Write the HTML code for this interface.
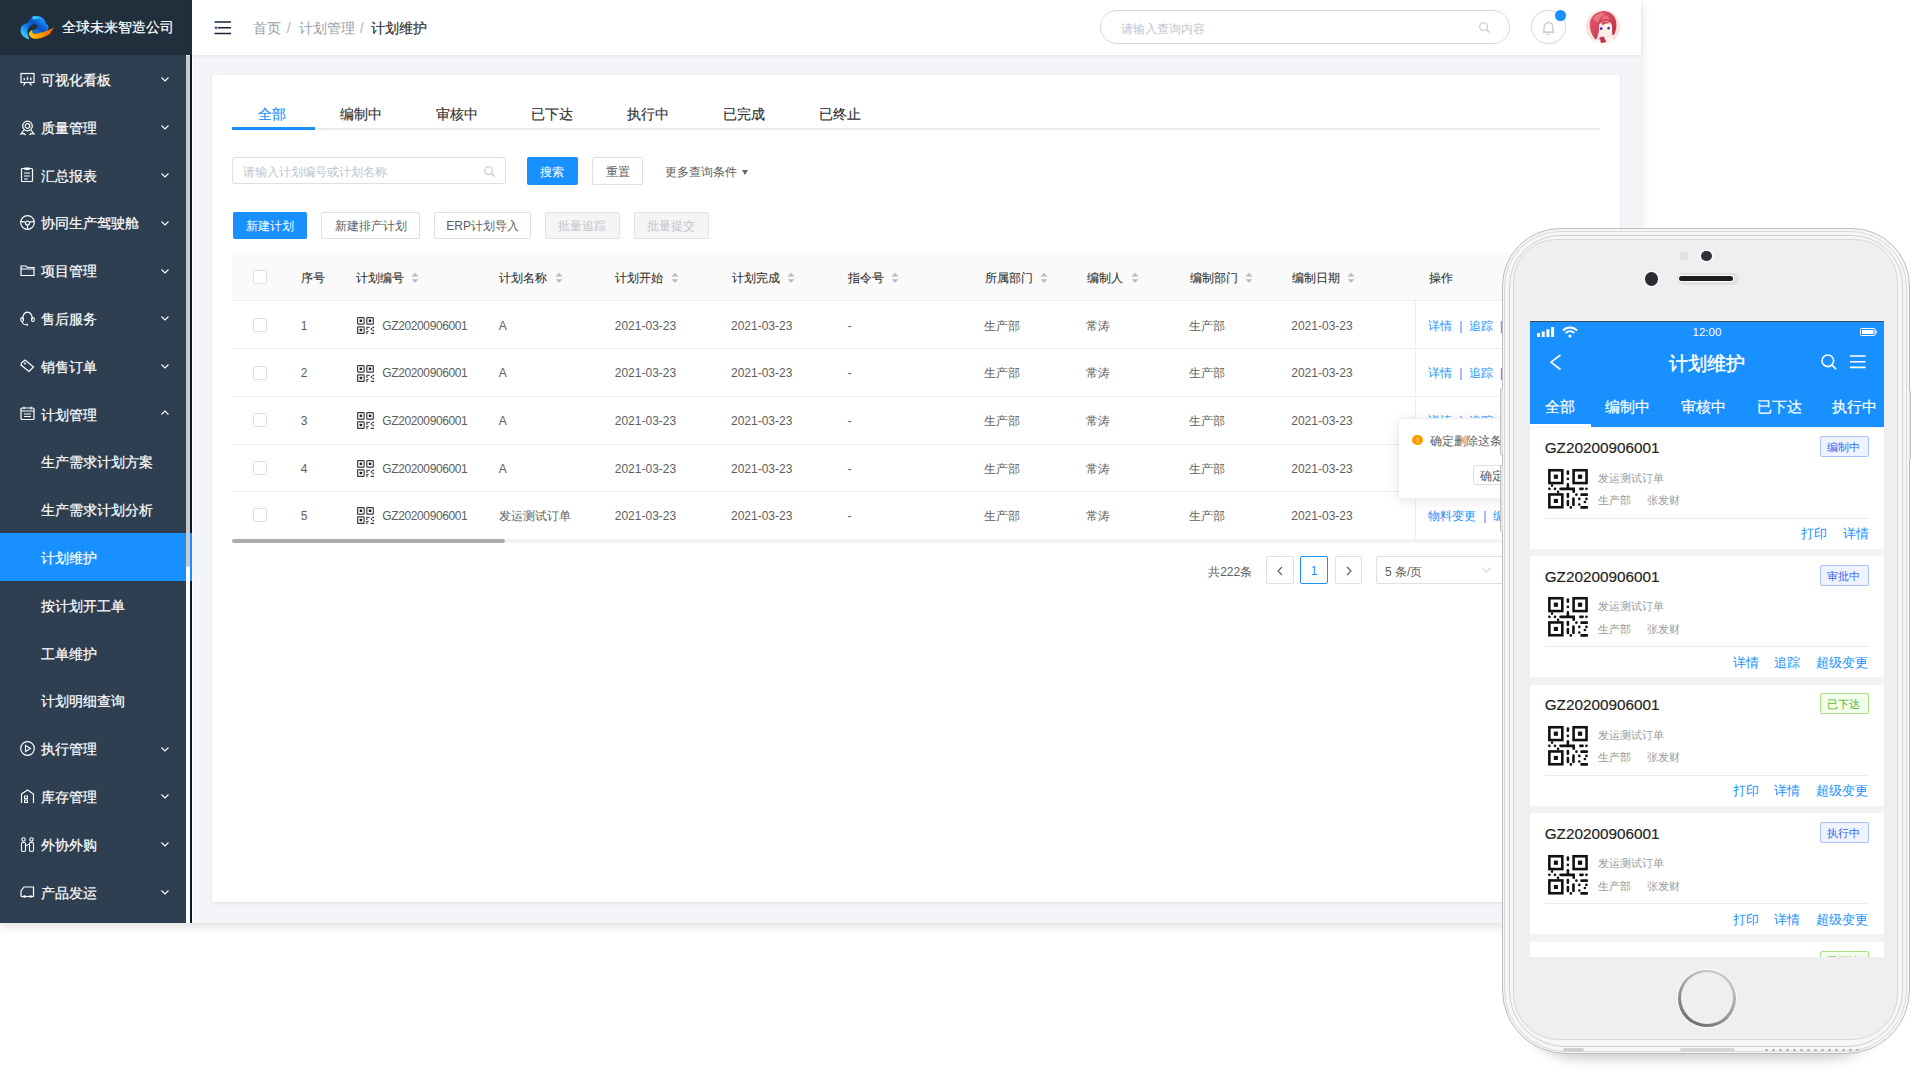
<!DOCTYPE html><html><head><meta charset="utf-8"><style>
html,body{margin:0;padding:0}
body{width:1920px;height:1080px;overflow:hidden;position:relative;background:#fff;font-family:"Liberation Sans",sans-serif}
.a{position:absolute}
.t{position:absolute;white-space:nowrap;line-height:1}
svg{overflow:visible}
</style></head><body>

<div class="a" style="left:0px;top:0px;width:1641.00px;height:922.50px;background:#f4f5f8;box-shadow:0 4px 9px rgba(0,0,0,0.12)"></div>
<div class="a" style="left:0px;top:0px;width:191.50px;height:922.50px;background:#2f3f52"></div>
<div class="a" style="left:0px;top:0px;width:191.50px;height:54.50px;background:#212e3c"></div>
<div class="a" style="left:190px;top:54.5px;width:1.50px;height:868.00px;background:#0b1b2b"></div>
<div class="a" style="left:0px;top:533.4px;width:191.50px;height:47.80px;background:#1890ff"></div>
<div class="a" style="left:190px;top:533.4px;width:1.50px;height:47.80px;background:#1890ff"></div>
<div class="a" style="left:186px;top:54.5px;width:4.00px;height:868.00px;background:#fff"></div>
<div class="a" style="left:186px;top:54.5px;width:4.00px;height:512.50px;background:#c9c9c9;border-radius:2px"></div>
<svg class="a" style="left:16px;top:12px" width="44" height="32" viewBox="0 0 1485 1080">
<defs><linearGradient id="lg1" x1="0.1" y1="0.9" x2="0.8" y2="0.2"><stop offset="0" stop-color="#45d8ff"/><stop offset="0.35" stop-color="#0d86f0"/><stop offset="0.7" stop-color="#0a4fc0"/><stop offset="1" stop-color="#1a8df5"/></linearGradient>
<linearGradient id="lg1b" x1="0" y1="0" x2="0" y2="1"><stop offset="0" stop-color="#3ad4ff"/><stop offset="0.3" stop-color="#0c6fe0"/><stop offset="1" stop-color="#0a48b0"/></linearGradient>
<linearGradient id="lg2" x1="0" y1="0" x2="1" y2="0"><stop offset="0" stop-color="#ffc400"/><stop offset="0.6" stop-color="#ff8a00"/><stop offset="1" stop-color="#ff5a00"/></linearGradient></defs>
<path d="M450 930 C250 880 120 720 160 560 C190 430 300 380 400 370 C430 230 560 130 720 140 C900 150 990 280 1000 380 C1090 420 1120 520 1080 600 C1040 680 950 710 850 715 L600 720 C540 720 520 680 560 640 C620 600 720 560 720 480 C720 420 650 400 580 420 C450 460 380 560 390 680 C400 800 450 880 450 930 Z" fill="url(#lg1)"/>
<path d="M560 140 C650 120 800 130 900 220 C800 200 700 220 620 260 C560 240 520 200 560 140 Z" fill="#3fd0ff" opacity="0.8"/>
<path d="M440 700 C470 640 530 610 580 600 C520 650 530 720 620 730 C800 740 1050 650 1310 510 C1200 640 1150 700 1170 720 C1080 780 950 880 720 900 C560 910 430 860 440 700 Z" fill="url(#lg2)"/>
</svg>
<div class="t" style="left:61.66px;top:20.38px;font-size:14px;color:#fff;font-weight:400;-webkit-text-stroke:0.2px #fff">全球未来智造公司</div>
<div class="t" style="left:40.66px;top:72.98px;font-size:14px;color:#fff;font-weight:400;-webkit-text-stroke:0.2px #fff">可视化看板</div>
<svg class="a" style="left:160px;top:76.3px;" width="10" height="7" viewBox="0 0 10 7"><path d="M1.5 1.5 L5 5 L8.5 1.5" fill="none" stroke="#fff" stroke-width="1.1"/></svg>
<svg class="a" style="left:20px;top:71.8px;" width="15" height="15" viewBox="0 0 15 15"><rect x="1" y="1.5" width="13" height="9" fill="none" stroke="#fff" stroke-width="1.2"/><path d="M4.2 8.2v-2.2M7.5 8.2v-3.4M10.8 8.2v-2.6M3.5 13.5l2-3M11.5 13.5l-2-3" stroke="#fff" stroke-width="1.3"/></svg>
<div class="t" style="left:40.66px;top:120.78px;font-size:14px;color:#fff;font-weight:400;-webkit-text-stroke:0.2px #fff">质量管理</div>
<svg class="a" style="left:160px;top:124.1px;" width="10" height="7" viewBox="0 0 10 7"><path d="M1.5 1.5 L5 5 L8.5 1.5" fill="none" stroke="#fff" stroke-width="1.1"/></svg>
<svg class="a" style="left:20px;top:119.6px;" width="15" height="15" viewBox="0 0 15 15"><circle cx="7.5" cy="6" r="4.8" fill="none" stroke="#fff" stroke-width="1.2"/><circle cx="7.5" cy="6" r="2.3" fill="none" stroke="#fff" stroke-width="1.2"/><path d="M4 10 L1 14 L4 13.5 L5.5 15 M11 10 L14 14 L11 13.5 L9.5 15" fill="none" stroke="#fff" stroke-width="1.2"/></svg>
<div class="t" style="left:40.66px;top:168.58px;font-size:14px;color:#fff;font-weight:400;-webkit-text-stroke:0.2px #fff">汇总报表</div>
<svg class="a" style="left:160px;top:171.89999999999998px;" width="10" height="7" viewBox="0 0 10 7"><path d="M1.5 1.5 L5 5 L8.5 1.5" fill="none" stroke="#fff" stroke-width="1.1"/></svg>
<svg class="a" style="left:20px;top:167.39999999999998px;" width="15" height="15" viewBox="0 0 15 15"><rect x="1.5" y="1.5" width="11" height="13" rx="1" fill="none" stroke="#fff" stroke-width="1.2"/><path d="M5 1.5v-0.5h4v1.5h-4z M4 6h6M4 9h6M4 12h4" stroke="#fff" stroke-width="1.1" fill="none"/></svg>
<div class="t" style="left:40.66px;top:216.38px;font-size:14px;color:#fff;font-weight:400;-webkit-text-stroke:0.2px #fff">协同生产驾驶舱</div>
<svg class="a" style="left:160px;top:219.7px;" width="10" height="7" viewBox="0 0 10 7"><path d="M1.5 1.5 L5 5 L8.5 1.5" fill="none" stroke="#fff" stroke-width="1.1"/></svg>
<svg class="a" style="left:20px;top:215.2px;" width="15" height="15" viewBox="0 0 15 15"><circle cx="7.5" cy="7.5" r="6.8" fill="none" stroke="#fff" stroke-width="1.2"/><circle cx="7.5" cy="8" r="2" fill="none" stroke="#fff" stroke-width="1.1"/><path d="M1 6.8 Q3.5 6.2 5.5 7.4 M9.5 7.4 Q11.5 6.2 14 6.8 M7.5 10 V14.2" fill="none" stroke="#fff" stroke-width="1.1"/></svg>
<div class="t" style="left:40.66px;top:264.18px;font-size:14px;color:#fff;font-weight:400;-webkit-text-stroke:0.2px #fff">项目管理</div>
<svg class="a" style="left:160px;top:267.5px;" width="10" height="7" viewBox="0 0 10 7"><path d="M1.5 1.5 L5 5 L8.5 1.5" fill="none" stroke="#fff" stroke-width="1.1"/></svg>
<svg class="a" style="left:20px;top:263.0px;" width="15" height="15" viewBox="0 0 15 15"><path d="M1 3 H6 L7.5 4.5 H14 V12.5 H1 Z M1 6 H14" fill="none" stroke="#fff" stroke-width="1.2"/></svg>
<div class="t" style="left:40.66px;top:311.98px;font-size:14px;color:#fff;font-weight:400;-webkit-text-stroke:0.2px #fff">售后服务</div>
<svg class="a" style="left:160px;top:315.3px;" width="10" height="7" viewBox="0 0 10 7"><path d="M1.5 1.5 L5 5 L8.5 1.5" fill="none" stroke="#fff" stroke-width="1.1"/></svg>
<svg class="a" style="left:20px;top:310.8px;" width="15" height="15" viewBox="0 0 15 15"><path d="M2.8 8.5 C2.3 4 4.8 1.2 7.5 1.2 C10.2 1.2 12.7 4 12.2 8.5" fill="none" stroke="#fff" stroke-width="1.2"/><rect x="0.8" y="6.5" width="2.6" height="4" rx="1.2" fill="none" stroke="#fff" stroke-width="1.1"/><rect x="11.6" y="6.5" width="2.6" height="4" rx="1.2" fill="none" stroke="#fff" stroke-width="1.1"/><path d="M2.2 10.5 C2.6 13 4.5 13.8 6.5 13.8" fill="none" stroke="#fff" stroke-width="1.1"/><circle cx="7.2" cy="13.8" r="1" fill="#fff"/></svg>
<div class="t" style="left:40.66px;top:359.78px;font-size:14px;color:#fff;font-weight:400;-webkit-text-stroke:0.2px #fff">销售订单</div>
<svg class="a" style="left:160px;top:363.09999999999997px;" width="10" height="7" viewBox="0 0 10 7"><path d="M1.5 1.5 L5 5 L8.5 1.5" fill="none" stroke="#fff" stroke-width="1.1"/></svg>
<svg class="a" style="left:20px;top:358.59999999999997px;" width="15" height="15" viewBox="0 0 15 15"><path d="M1.5 4 L5 1 L13.5 8 L9 12.5 L1 6 Z" fill="none" stroke="#fff" stroke-width="1.2"/><circle cx="5" cy="4.5" r="1" fill="#fff"/></svg>
<div class="t" style="left:40.66px;top:407.58px;font-size:14px;color:#fff;font-weight:400;-webkit-text-stroke:0.2px #fff">计划管理</div>
<svg class="a" style="left:160px;top:409.4px;" width="10" height="7" viewBox="0 0 10 7"><path d="M1.5 5.5 L5 2 L8.5 5.5" fill="none" stroke="#fff" stroke-width="1.1"/></svg>
<svg class="a" style="left:20px;top:406.4px;" width="15" height="15" viewBox="0 0 15 15"><rect x="1" y="2" width="13" height="11.5" rx="1" fill="none" stroke="#fff" stroke-width="1.2"/><path d="M1 5H14M4 0.5v3M11 0.5v3M4 8h7M4 10.5h7" stroke="#fff" stroke-width="1.1"/></svg>
<div class="t" style="left:40.66px;top:455.38px;font-size:14px;color:#fff;font-weight:400;-webkit-text-stroke:0.2px #fff">生产需求计划方案</div>
<div class="t" style="left:40.66px;top:503.18px;font-size:14px;color:#fff;font-weight:400;-webkit-text-stroke:0.2px #fff">生产需求计划分析</div>
<div class="t" style="left:40.66px;top:550.98px;font-size:14px;color:#fff;font-weight:400;-webkit-text-stroke:0.2px #fff">计划维护</div>
<div class="t" style="left:40.66px;top:598.78px;font-size:14px;color:#fff;font-weight:400;-webkit-text-stroke:0.2px #fff">按计划开工单</div>
<div class="t" style="left:40.66px;top:646.58px;font-size:14px;color:#fff;font-weight:400;-webkit-text-stroke:0.2px #fff">工单维护</div>
<div class="t" style="left:40.66px;top:694.38px;font-size:14px;color:#fff;font-weight:400;-webkit-text-stroke:0.2px #fff">计划明细查询</div>
<div class="t" style="left:40.66px;top:742.18px;font-size:14px;color:#fff;font-weight:400;-webkit-text-stroke:0.2px #fff">执行管理</div>
<svg class="a" style="left:160px;top:745.4999999999999px;" width="10" height="7" viewBox="0 0 10 7"><path d="M1.5 1.5 L5 5 L8.5 1.5" fill="none" stroke="#fff" stroke-width="1.1"/></svg>
<svg class="a" style="left:20px;top:740.9999999999999px;" width="15" height="15" viewBox="0 0 15 15"><circle cx="7.5" cy="7.5" r="6.8" fill="none" stroke="#fff" stroke-width="1.2"/><path d="M5.5 4.5 L10.5 7.5 L5.5 10.5 Z" fill="none" stroke="#fff" stroke-width="1.1"/></svg>
<div class="t" style="left:40.66px;top:789.98px;font-size:14px;color:#fff;font-weight:400;-webkit-text-stroke:0.2px #fff">库存管理</div>
<svg class="a" style="left:160px;top:793.3px;" width="10" height="7" viewBox="0 0 10 7"><path d="M1.5 1.5 L5 5 L8.5 1.5" fill="none" stroke="#fff" stroke-width="1.1"/></svg>
<svg class="a" style="left:20px;top:788.8px;" width="15" height="15" viewBox="0 0 15 15"><path d="M1.5 14 V5 L7.5 1 L13.5 5 V14" fill="none" stroke="#fff" stroke-width="1.2"/><rect x="4.5" y="7" width="3" height="2.5" fill="none" stroke="#fff" stroke-width="1"/><rect x="4.5" y="11" width="3" height="2.5" fill="none" stroke="#fff" stroke-width="1"/></svg>
<div class="t" style="left:40.66px;top:837.78px;font-size:14px;color:#fff;font-weight:400;-webkit-text-stroke:0.2px #fff">外协外购</div>
<svg class="a" style="left:160px;top:841.0999999999999px;" width="10" height="7" viewBox="0 0 10 7"><path d="M1.5 1.5 L5 5 L8.5 1.5" fill="none" stroke="#fff" stroke-width="1.1"/></svg>
<svg class="a" style="left:20px;top:836.5999999999999px;" width="15" height="15" viewBox="0 0 15 15"><circle cx="3.5" cy="2.5" r="1.7" fill="none" stroke="#fff" stroke-width="1.1"/><circle cx="11.5" cy="2.5" r="1.7" fill="none" stroke="#fff" stroke-width="1.1"/><rect x="1.5" y="5.5" width="4" height="9" rx="1.2" fill="none" stroke="#fff" stroke-width="1.1"/><rect x="9.5" y="5.5" width="4" height="9" rx="1.2" fill="none" stroke="#fff" stroke-width="1.1"/><path d="M5.5 9 L9.5 7" stroke="#fff" stroke-width="1"/></svg>
<div class="t" style="left:40.66px;top:885.58px;font-size:14px;color:#fff;font-weight:400;-webkit-text-stroke:0.2px #fff">产品发运</div>
<svg class="a" style="left:160px;top:888.8999999999999px;" width="10" height="7" viewBox="0 0 10 7"><path d="M1.5 1.5 L5 5 L8.5 1.5" fill="none" stroke="#fff" stroke-width="1.1"/></svg>
<svg class="a" style="left:20px;top:884.3999999999999px;" width="15" height="15" viewBox="0 0 15 15"><path d="M1 12.5 V7 L4 3 H13.5 V12.5" fill="none" stroke="#fff" stroke-width="1.2"/><path d="M1 12.5 H14" stroke="#fff" stroke-width="1.2"/><circle cx="4.5" cy="12.5" r="1.3" fill="#fff"/><circle cx="10.5" cy="12.5" r="1.3" fill="#fff"/></svg>
<div class="a" style="left:191.5px;top:0px;width:1449.50px;height:55.00px;background:#fff;box-shadow:0 1px 4px rgba(0,21,41,0.08)"></div>
<div class="a" style="left:191.5px;top:0px;width:1.00px;height:922.50px;background:#fff"></div>
<svg class="a" style="left:213.5px;top:20.5px;" width="18" height="14" viewBox="0 0 18 14"><path d="M0.5 1h16.5M3.5 6.8h13.5M0.5 12.6h16.5" stroke="#15243a" stroke-width="1.5"/><path d="M0.3 6.8 L2.6 5.2 L2.6 8.4 Z" fill="#15243a"/></svg>
<div class="t" style="left:253.36px;top:21.38px;font-size:14px;color:#97a0ab;font-weight:400;">首页</div>
<div class="t" style="left:286.66px;top:21.38px;font-size:14px;color:#b0b6be;font-weight:400;">/</div>
<div class="t" style="left:298.96px;top:21.38px;font-size:14px;color:#97a0ab;font-weight:400;">计划管理</div>
<div class="t" style="left:359.66px;top:21.38px;font-size:14px;color:#b0b6be;font-weight:400;">/</div>
<div class="t" style="left:371.36px;top:21.38px;font-size:14px;color:#303133;font-weight:400;-webkit-text-stroke:0.2px #303133">计划维护</div>
<div class="a" style="left:1100.4px;top:10px;width:410.10px;height:34.20px;border:1px solid #d9d9d9;border-radius:18px;box-sizing:border-box;background:#fff"></div>
<div class="t" style="left:1121.08px;top:22.74px;font-size:12px;color:#c0c4cc;font-weight:400;">请输入查询内容</div>
<svg class="a" style="left:1479px;top:22px;" width="12" height="12" viewBox="0 0 12 12"><circle cx="4.6" cy="4.6" r="3.9" fill="none" stroke="#c0c4cc" stroke-width="1.1"/><path d="M7.5 7.5 L10.5 10.5" stroke="#c0c4cc" stroke-width="1.2"/></svg>
<div class="a" style="left:1531px;top:10px;width:34.50px;height:34.20px;border:1px solid #d9d9d9;border-radius:50%;box-sizing:border-box;background:#fff"></div>
<svg class="a" style="left:1542px;top:20.5px;" width="13" height="15" viewBox="0 0 13 15"><path d="M2 11 V6.5 C2 3.5 4 1.8 6.5 1.8 C9 1.8 11 3.5 11 6.5 V11 Z M0.8 11.2 H12.2" fill="none" stroke="#bdbdbd" stroke-width="1.1"/><path d="M6.5 0.5 V1.8 M4.8 12.5 C5 13.8 8 13.8 8.2 12.5" fill="none" stroke="#c0c4cc" stroke-width="1.1"/></svg>
<div class="a" style="left:1555px;top:10px;width:10.5px;height:10.5px;border-radius:50%;background:#1890ff"></div>
<svg class="a" style="left:1586px;top:9.7px;" width="34" height="34" viewBox="0 0 34 34">
<defs><clipPath id="avc"><circle cx="17" cy="17" r="17"/></clipPath>
<linearGradient id="hair" x1="0" y1="0" x2="1" y2="1"><stop offset="0" stop-color="#e25c6e"/><stop offset="0.5" stop-color="#d44458"/><stop offset="1" stop-color="#b8283e"/></linearGradient></defs>
<g clip-path="url(#avc)">
<rect width="34" height="34" fill="#f8e2dc"/>
<path d="M8 34 L9.5 27 C14 28.5 21 28.5 26 26.5 L29 34 Z" fill="#fdf6f2"/>
<path d="M3.8 15 C3.5 8 8.5 2.5 16 1.2 C22.5 0.5 28.5 4.5 30 11 C31 16 30 21 28 25 L26.5 25 L25.5 15.5 C23.5 11.5 19.5 10.5 16 12.5 C13.5 14 12.8 17.5 13 21 C12 24.5 11.5 27.5 10 30 C6.5 26.5 4 21 3.8 15 Z" fill="url(#hair)"/>
<path d="M7.5 8 C10 4.5 14.5 2.8 19 3 C16.5 5 13.5 8 12 12 C10 11.5 8.5 10 7.5 8 Z" fill="#f0808e" opacity="0.85"/>
<path d="M17 5.5 C20 5 23.5 6.5 24.5 9.5 C21.5 8.5 18.5 9 16 10 Z" fill="#f07a88" opacity="0.8"/>
<path d="M13 15 C15.5 11.5 20.5 10.5 25 13 C26.5 16 26.5 20.5 25.5 22.5 C24 25 21.5 26.5 19 26.5 C16 26 14 24 13.2 21 Z" fill="#fcf0e8"/>
<path d="M15.5 13 C18 11 22 11.5 24.5 13.5 C21.5 13 18.5 13.5 16.5 15.5 Z" fill="#d44458"/>
<ellipse cx="15.2" cy="18.5" rx="1.3" ry="1.5" fill="#4a2fae"/><ellipse cx="22.6" cy="18.2" rx="1.2" ry="1.4" fill="#4a2fae"/>
<path d="M13.5 27.5 L17.5 26.5 L20.5 32 L15 33 Z" fill="#c2304a"/>
<path d="M11 29 L13.5 27 L14.5 30.5 Z" fill="#c0bddc"/>
</g></svg>
<div class="a" style="left:212px;top:75px;width:1408.00px;height:827.00px;background:#fff;box-shadow:0 1px 3px rgba(0,0,0,0.11)"></div>
<div class="t" style="left:257.56px;top:106.98px;font-size:14px;color:#1890ff;font-weight:400;-webkit-text-stroke:0.15px #1890ff">全部</div>
<div class="t" style="left:340.16px;top:106.98px;font-size:14px;color:#303133;font-weight:400;-webkit-text-stroke:0.15px #303133">编制中</div>
<div class="t" style="left:435.76px;top:106.98px;font-size:14px;color:#303133;font-weight:400;-webkit-text-stroke:0.15px #303133">审核中</div>
<div class="t" style="left:531.36px;top:106.98px;font-size:14px;color:#303133;font-weight:400;-webkit-text-stroke:0.15px #303133">已下达</div>
<div class="t" style="left:626.66px;top:106.98px;font-size:14px;color:#303133;font-weight:400;-webkit-text-stroke:0.15px #303133">执行中</div>
<div class="t" style="left:723.16px;top:106.98px;font-size:14px;color:#303133;font-weight:400;-webkit-text-stroke:0.15px #303133">已完成</div>
<div class="t" style="left:819.16px;top:106.98px;font-size:14px;color:#303133;font-weight:400;-webkit-text-stroke:0.15px #303133">已终止</div>
<div class="a" style="left:232px;top:128px;width:1368.00px;height:2.00px;background:#e9ebef"></div>
<div class="a" style="left:232px;top:126.6px;width:82.70px;height:3.20px;background:#1890ff"></div>
<div class="a" style="left:232px;top:157px;width:273.50px;height:27.40px;border:1px solid #dcdfe6;border-radius:2px;box-sizing:border-box"></div>
<div class="t" style="left:242.68px;top:166.34px;font-size:12px;color:#c0c4cc;font-weight:400;">请输入计划编号或计划名称</div>
<svg class="a" style="left:483.5px;top:165.5px;" width="12" height="12" viewBox="0 0 12 12"><circle cx="4.6" cy="4.6" r="3.9" fill="none" stroke="#c0c4cc" stroke-width="1.1"/><path d="M7.5 7.5 L10.5 10.5" stroke="#c0c4cc" stroke-width="1.2"/></svg>
<div class="a" style="left:526.5px;top:157px;width:51.00px;height:27.50px;background:#1890ff;border-radius:2px"></div>
<div class="t" style="left:539.68px;top:166.34px;font-size:12px;color:#fff;font-weight:400;">搜索</div>
<div class="a" style="left:592px;top:157px;width:51.30px;height:27.50px;border:1px solid #dcdfe6;border-radius:2px;box-sizing:border-box;background:#fff"></div>
<div class="t" style="left:606.08px;top:166.34px;font-size:12px;color:#5e5e5e;font-weight:400;">重置</div>
<div class="t" style="left:664.68px;top:166.34px;font-size:12px;color:#5e5e5e;font-weight:400;">更多查询条件</div>
<svg class="a" style="left:741.5px;top:169.5px;" width="6" height="5" viewBox="0 0 6 5"><path d="M0 0 H6 L3 5 Z" fill="#606266"/></svg>
<div class="a" style="left:232.6px;top:212.2px;width:74.80px;height:26.90px;background:#1890ff;border-radius:2px"></div>
<div class="t" style="left:232.6px;width:74.80px;text-align:center;top:220.44px;font-size:12px;color:#fff">新建计划</div>
<div class="a" style="left:321.4px;top:212.2px;width:98.60px;height:26.90px;border:1px solid #dcdfe6;border-radius:2px;box-sizing:border-box;background:#fff"></div>
<div class="t" style="left:321.4px;width:98.60px;text-align:center;top:220.44px;font-size:12px;color:#5e5e5e">新建排产计划</div>
<div class="a" style="left:434.2px;top:212.2px;width:97.00px;height:26.90px;border:1px solid #dcdfe6;border-radius:2px;box-sizing:border-box;background:#fff"></div>
<div class="t" style="left:434.2px;width:97.00px;text-align:center;top:220.44px;font-size:12px;color:#5e5e5e">ERP计划导入</div>
<div class="a" style="left:545.3px;top:212.2px;width:74.40px;height:26.90px;border:1px solid #e3e3e3;border-radius:2px;box-sizing:border-box;background:#f5f5f5"></div>
<div class="t" style="left:545.3px;width:74.40px;text-align:center;top:220.44px;font-size:12px;color:#c0c4cc">批量追踪</div>
<div class="a" style="left:634.3px;top:212.2px;width:74.40px;height:26.90px;border:1px solid #e3e3e3;border-radius:2px;box-sizing:border-box;background:#f5f5f5"></div>
<div class="t" style="left:634.3px;width:74.40px;text-align:center;top:220.44px;font-size:12px;color:#c0c4cc">批量提交</div>
<div class="a" style="left:232px;top:253px;width:1368.00px;height:47.50px;background:#fafafa"></div>
<div class="a" style="left:232px;top:300px;width:1368.00px;height:1.00px;background:#ededed"></div>
<div class="a" style="left:232px;top:348.3px;width:1368.00px;height:1.00px;background:#ededed"></div>
<div class="a" style="left:232px;top:395.90000000000003px;width:1368.00px;height:1.00px;background:#ededed"></div>
<div class="a" style="left:232px;top:443.5px;width:1368.00px;height:1.00px;background:#ededed"></div>
<div class="a" style="left:232px;top:491.1px;width:1368.00px;height:1.00px;background:#ededed"></div>
<div class="a" style="left:232px;top:538.6999999999999px;width:1368.00px;height:1.00px;background:#ededed"></div>
<div class="a" style="left:253px;top:270px;width:14.00px;height:14.00px;border:1px solid #dcdfe6;border-radius:2px;box-sizing:border-box;background:#fff"></div>
<div class="t" style="left:300.88px;top:272.14px;font-size:12px;color:#333;font-weight:400;-webkit-text-stroke:0.1px #333">序号</div>
<div class="t" style="left:355.88px;top:272.14px;font-size:12px;color:#333;font-weight:400;-webkit-text-stroke:0.1px #333">计划编号</div>
<svg class="a" style="left:410.8px;top:271.5px;" width="8" height="12" viewBox="0 0 8 12"><path d="M0.5 4.5 L4 0.8 L7.5 4.5 Z M0.5 7.3 L4 11 L7.5 7.3 Z" fill="#bdbdbd"/></svg>
<div class="t" style="left:499.38px;top:272.14px;font-size:12px;color:#333;font-weight:400;-webkit-text-stroke:0.1px #333">计划名称</div>
<svg class="a" style="left:555px;top:271.5px;" width="8" height="12" viewBox="0 0 8 12"><path d="M0.5 4.5 L4 0.8 L7.5 4.5 Z M0.5 7.3 L4 11 L7.5 7.3 Z" fill="#bdbdbd"/></svg>
<div class="t" style="left:615.38px;top:272.14px;font-size:12px;color:#333;font-weight:400;-webkit-text-stroke:0.1px #333">计划开始</div>
<svg class="a" style="left:671px;top:271.5px;" width="8" height="12" viewBox="0 0 8 12"><path d="M0.5 4.5 L4 0.8 L7.5 4.5 Z M0.5 7.3 L4 11 L7.5 7.3 Z" fill="#bdbdbd"/></svg>
<div class="t" style="left:731.58px;top:272.14px;font-size:12px;color:#333;font-weight:400;-webkit-text-stroke:0.1px #333">计划完成</div>
<svg class="a" style="left:787px;top:271.5px;" width="8" height="12" viewBox="0 0 8 12"><path d="M0.5 4.5 L4 0.8 L7.5 4.5 Z M0.5 7.3 L4 11 L7.5 7.3 Z" fill="#bdbdbd"/></svg>
<div class="t" style="left:848.18px;top:272.14px;font-size:12px;color:#333;font-weight:400;-webkit-text-stroke:0.1px #333">指令号</div>
<svg class="a" style="left:891.4px;top:271.5px;" width="8" height="12" viewBox="0 0 8 12"><path d="M0.5 4.5 L4 0.8 L7.5 4.5 Z M0.5 7.3 L4 11 L7.5 7.3 Z" fill="#bdbdbd"/></svg>
<div class="t" style="left:984.78px;top:272.14px;font-size:12px;color:#333;font-weight:400;-webkit-text-stroke:0.1px #333">所属部门</div>
<svg class="a" style="left:1040px;top:271.5px;" width="8" height="12" viewBox="0 0 8 12"><path d="M0.5 4.5 L4 0.8 L7.5 4.5 Z M0.5 7.3 L4 11 L7.5 7.3 Z" fill="#bdbdbd"/></svg>
<div class="t" style="left:1086.88px;top:272.14px;font-size:12px;color:#333;font-weight:400;-webkit-text-stroke:0.1px #333">编制人</div>
<svg class="a" style="left:1130.8px;top:271.5px;" width="8" height="12" viewBox="0 0 8 12"><path d="M0.5 4.5 L4 0.8 L7.5 4.5 Z M0.5 7.3 L4 11 L7.5 7.3 Z" fill="#bdbdbd"/></svg>
<div class="t" style="left:1189.78px;top:272.14px;font-size:12px;color:#333;font-weight:400;-webkit-text-stroke:0.1px #333">编制部门</div>
<svg class="a" style="left:1245.2px;top:271.5px;" width="8" height="12" viewBox="0 0 8 12"><path d="M0.5 4.5 L4 0.8 L7.5 4.5 Z M0.5 7.3 L4 11 L7.5 7.3 Z" fill="#bdbdbd"/></svg>
<div class="t" style="left:1291.88px;top:272.14px;font-size:12px;color:#333;font-weight:400;-webkit-text-stroke:0.1px #333">编制日期</div>
<svg class="a" style="left:1347.4px;top:271.5px;" width="8" height="12" viewBox="0 0 8 12"><path d="M0.5 4.5 L4 0.8 L7.5 4.5 Z M0.5 7.3 L4 11 L7.5 7.3 Z" fill="#bdbdbd"/></svg>
<div class="t" style="left:1429.08px;top:272.14px;font-size:12px;color:#333;font-weight:400;-webkit-text-stroke:0.1px #333">操作</div>
<div class="a" style="left:253px;top:318.0px;width:14.00px;height:14.00px;border:1px solid #dcdfe6;border-radius:2px;box-sizing:border-box;background:#fff"></div>
<div class="t" style="left:300.78px;top:319.84px;font-size:12px;color:#5e5e5e;font-weight:400;">1</div>
<svg class="a" style="left:357.2px;top:316.9px;" width="17" height="17" viewBox="0 0 17 17"><g fill="none" stroke="#3a3a3a" stroke-width="1.15"><rect x="0.6" y="0.6" width="6.5" height="6.5" rx="0.6"/><rect x="9.8" y="0.6" width="6.5" height="6.5" rx="0.6"/><rect x="0.6" y="9.8" width="6.5" height="6.5" rx="0.6"/><path d="M9.9 12.5V10.2H12.4 M9.9 16.6V14.5H11.2 M14.1 16.3H16.6" stroke-linecap="round"/></g><g fill="#222"><rect x="2.6" y="2.6" width="2.5" height="2.5" rx="0.5"/><rect x="11.8" y="2.6" width="2.5" height="2.5" rx="0.5"/><rect x="2.6" y="11.8" width="2.5" height="2.5" rx="0.5"/><circle cx="16.2" cy="10.3" r="0.85"/><circle cx="14.5" cy="11.9" r="0.85"/><circle cx="16.2" cy="13.5" r="0.85"/></g></svg>
<div class="t" style="left:382.28px;top:319.84px;font-size:12px;color:#5e5e5e;font-weight:400;letter-spacing:-0.38px">GZ20200906001</div>
<div class="t" style="left:498.78px;top:319.84px;font-size:12px;color:#5e5e5e;font-weight:400;">A</div>
<div class="t" style="left:614.78px;top:319.84px;font-size:12px;color:#5e5e5e;font-weight:400;">2021-03-23</div>
<div class="t" style="left:730.98px;top:319.84px;font-size:12px;color:#5e5e5e;font-weight:400;">2021-03-23</div>
<div class="t" style="left:847.58px;top:319.84px;font-size:12px;color:#5e5e5e;font-weight:400;">-</div>
<div class="t" style="left:984.18px;top:319.84px;font-size:12px;color:#5e5e5e;font-weight:400;">生产部</div>
<div class="t" style="left:1086.28px;top:319.84px;font-size:12px;color:#5e5e5e;font-weight:400;">常涛</div>
<div class="t" style="left:1189.18px;top:319.84px;font-size:12px;color:#5e5e5e;font-weight:400;">生产部</div>
<div class="t" style="left:1291.28px;top:319.84px;font-size:12px;color:#5e5e5e;font-weight:400;">2021-03-23</div>
<div class="a" style="left:253px;top:365.6px;width:14.00px;height:14.00px;border:1px solid #dcdfe6;border-radius:2px;box-sizing:border-box;background:#fff"></div>
<div class="t" style="left:300.78px;top:367.44px;font-size:12px;color:#5e5e5e;font-weight:400;">2</div>
<svg class="a" style="left:357.2px;top:364.5px;" width="17" height="17" viewBox="0 0 17 17"><g fill="none" stroke="#3a3a3a" stroke-width="1.15"><rect x="0.6" y="0.6" width="6.5" height="6.5" rx="0.6"/><rect x="9.8" y="0.6" width="6.5" height="6.5" rx="0.6"/><rect x="0.6" y="9.8" width="6.5" height="6.5" rx="0.6"/><path d="M9.9 12.5V10.2H12.4 M9.9 16.6V14.5H11.2 M14.1 16.3H16.6" stroke-linecap="round"/></g><g fill="#222"><rect x="2.6" y="2.6" width="2.5" height="2.5" rx="0.5"/><rect x="11.8" y="2.6" width="2.5" height="2.5" rx="0.5"/><rect x="2.6" y="11.8" width="2.5" height="2.5" rx="0.5"/><circle cx="16.2" cy="10.3" r="0.85"/><circle cx="14.5" cy="11.9" r="0.85"/><circle cx="16.2" cy="13.5" r="0.85"/></g></svg>
<div class="t" style="left:382.28px;top:367.44px;font-size:12px;color:#5e5e5e;font-weight:400;letter-spacing:-0.38px">GZ20200906001</div>
<div class="t" style="left:498.78px;top:367.44px;font-size:12px;color:#5e5e5e;font-weight:400;">A</div>
<div class="t" style="left:614.78px;top:367.44px;font-size:12px;color:#5e5e5e;font-weight:400;">2021-03-23</div>
<div class="t" style="left:730.98px;top:367.44px;font-size:12px;color:#5e5e5e;font-weight:400;">2021-03-23</div>
<div class="t" style="left:847.58px;top:367.44px;font-size:12px;color:#5e5e5e;font-weight:400;">-</div>
<div class="t" style="left:984.18px;top:367.44px;font-size:12px;color:#5e5e5e;font-weight:400;">生产部</div>
<div class="t" style="left:1086.28px;top:367.44px;font-size:12px;color:#5e5e5e;font-weight:400;">常涛</div>
<div class="t" style="left:1189.18px;top:367.44px;font-size:12px;color:#5e5e5e;font-weight:400;">生产部</div>
<div class="t" style="left:1291.28px;top:367.44px;font-size:12px;color:#5e5e5e;font-weight:400;">2021-03-23</div>
<div class="a" style="left:253px;top:413.2px;width:14.00px;height:14.00px;border:1px solid #dcdfe6;border-radius:2px;box-sizing:border-box;background:#fff"></div>
<div class="t" style="left:300.78px;top:415.04px;font-size:12px;color:#5e5e5e;font-weight:400;">3</div>
<svg class="a" style="left:357.2px;top:412.09999999999997px;" width="17" height="17" viewBox="0 0 17 17"><g fill="none" stroke="#3a3a3a" stroke-width="1.15"><rect x="0.6" y="0.6" width="6.5" height="6.5" rx="0.6"/><rect x="9.8" y="0.6" width="6.5" height="6.5" rx="0.6"/><rect x="0.6" y="9.8" width="6.5" height="6.5" rx="0.6"/><path d="M9.9 12.5V10.2H12.4 M9.9 16.6V14.5H11.2 M14.1 16.3H16.6" stroke-linecap="round"/></g><g fill="#222"><rect x="2.6" y="2.6" width="2.5" height="2.5" rx="0.5"/><rect x="11.8" y="2.6" width="2.5" height="2.5" rx="0.5"/><rect x="2.6" y="11.8" width="2.5" height="2.5" rx="0.5"/><circle cx="16.2" cy="10.3" r="0.85"/><circle cx="14.5" cy="11.9" r="0.85"/><circle cx="16.2" cy="13.5" r="0.85"/></g></svg>
<div class="t" style="left:382.28px;top:415.04px;font-size:12px;color:#5e5e5e;font-weight:400;letter-spacing:-0.38px">GZ20200906001</div>
<div class="t" style="left:498.78px;top:415.04px;font-size:12px;color:#5e5e5e;font-weight:400;">A</div>
<div class="t" style="left:614.78px;top:415.04px;font-size:12px;color:#5e5e5e;font-weight:400;">2021-03-23</div>
<div class="t" style="left:730.98px;top:415.04px;font-size:12px;color:#5e5e5e;font-weight:400;">2021-03-23</div>
<div class="t" style="left:847.58px;top:415.04px;font-size:12px;color:#5e5e5e;font-weight:400;">-</div>
<div class="t" style="left:984.18px;top:415.04px;font-size:12px;color:#5e5e5e;font-weight:400;">生产部</div>
<div class="t" style="left:1086.28px;top:415.04px;font-size:12px;color:#5e5e5e;font-weight:400;">常涛</div>
<div class="t" style="left:1189.18px;top:415.04px;font-size:12px;color:#5e5e5e;font-weight:400;">生产部</div>
<div class="t" style="left:1291.28px;top:415.04px;font-size:12px;color:#5e5e5e;font-weight:400;">2021-03-23</div>
<div class="a" style="left:253px;top:460.8px;width:14.00px;height:14.00px;border:1px solid #dcdfe6;border-radius:2px;box-sizing:border-box;background:#fff"></div>
<div class="t" style="left:300.78px;top:462.64px;font-size:12px;color:#5e5e5e;font-weight:400;">4</div>
<svg class="a" style="left:357.2px;top:459.7px;" width="17" height="17" viewBox="0 0 17 17"><g fill="none" stroke="#3a3a3a" stroke-width="1.15"><rect x="0.6" y="0.6" width="6.5" height="6.5" rx="0.6"/><rect x="9.8" y="0.6" width="6.5" height="6.5" rx="0.6"/><rect x="0.6" y="9.8" width="6.5" height="6.5" rx="0.6"/><path d="M9.9 12.5V10.2H12.4 M9.9 16.6V14.5H11.2 M14.1 16.3H16.6" stroke-linecap="round"/></g><g fill="#222"><rect x="2.6" y="2.6" width="2.5" height="2.5" rx="0.5"/><rect x="11.8" y="2.6" width="2.5" height="2.5" rx="0.5"/><rect x="2.6" y="11.8" width="2.5" height="2.5" rx="0.5"/><circle cx="16.2" cy="10.3" r="0.85"/><circle cx="14.5" cy="11.9" r="0.85"/><circle cx="16.2" cy="13.5" r="0.85"/></g></svg>
<div class="t" style="left:382.28px;top:462.64px;font-size:12px;color:#5e5e5e;font-weight:400;letter-spacing:-0.38px">GZ20200906001</div>
<div class="t" style="left:498.78px;top:462.64px;font-size:12px;color:#5e5e5e;font-weight:400;">A</div>
<div class="t" style="left:614.78px;top:462.64px;font-size:12px;color:#5e5e5e;font-weight:400;">2021-03-23</div>
<div class="t" style="left:730.98px;top:462.64px;font-size:12px;color:#5e5e5e;font-weight:400;">2021-03-23</div>
<div class="t" style="left:847.58px;top:462.64px;font-size:12px;color:#5e5e5e;font-weight:400;">-</div>
<div class="t" style="left:984.18px;top:462.64px;font-size:12px;color:#5e5e5e;font-weight:400;">生产部</div>
<div class="t" style="left:1086.28px;top:462.64px;font-size:12px;color:#5e5e5e;font-weight:400;">常涛</div>
<div class="t" style="left:1189.18px;top:462.64px;font-size:12px;color:#5e5e5e;font-weight:400;">生产部</div>
<div class="t" style="left:1291.28px;top:462.64px;font-size:12px;color:#5e5e5e;font-weight:400;">2021-03-23</div>
<div class="a" style="left:253px;top:508.4px;width:14.00px;height:14.00px;border:1px solid #dcdfe6;border-radius:2px;box-sizing:border-box;background:#fff"></div>
<div class="t" style="left:300.78px;top:510.24px;font-size:12px;color:#5e5e5e;font-weight:400;">5</div>
<svg class="a" style="left:357.2px;top:507.29999999999995px;" width="17" height="17" viewBox="0 0 17 17"><g fill="none" stroke="#3a3a3a" stroke-width="1.15"><rect x="0.6" y="0.6" width="6.5" height="6.5" rx="0.6"/><rect x="9.8" y="0.6" width="6.5" height="6.5" rx="0.6"/><rect x="0.6" y="9.8" width="6.5" height="6.5" rx="0.6"/><path d="M9.9 12.5V10.2H12.4 M9.9 16.6V14.5H11.2 M14.1 16.3H16.6" stroke-linecap="round"/></g><g fill="#222"><rect x="2.6" y="2.6" width="2.5" height="2.5" rx="0.5"/><rect x="11.8" y="2.6" width="2.5" height="2.5" rx="0.5"/><rect x="2.6" y="11.8" width="2.5" height="2.5" rx="0.5"/><circle cx="16.2" cy="10.3" r="0.85"/><circle cx="14.5" cy="11.9" r="0.85"/><circle cx="16.2" cy="13.5" r="0.85"/></g></svg>
<div class="t" style="left:382.28px;top:510.24px;font-size:12px;color:#5e5e5e;font-weight:400;letter-spacing:-0.38px">GZ20200906001</div>
<div class="t" style="left:498.78px;top:510.24px;font-size:12px;color:#5e5e5e;font-weight:400;">发运测试订单</div>
<div class="t" style="left:614.78px;top:510.24px;font-size:12px;color:#5e5e5e;font-weight:400;">2021-03-23</div>
<div class="t" style="left:730.98px;top:510.24px;font-size:12px;color:#5e5e5e;font-weight:400;">2021-03-23</div>
<div class="t" style="left:847.58px;top:510.24px;font-size:12px;color:#5e5e5e;font-weight:400;">-</div>
<div class="t" style="left:984.18px;top:510.24px;font-size:12px;color:#5e5e5e;font-weight:400;">生产部</div>
<div class="t" style="left:1086.28px;top:510.24px;font-size:12px;color:#5e5e5e;font-weight:400;">常涛</div>
<div class="t" style="left:1189.18px;top:510.24px;font-size:12px;color:#5e5e5e;font-weight:400;">生产部</div>
<div class="t" style="left:1291.28px;top:510.24px;font-size:12px;color:#5e5e5e;font-weight:400;">2021-03-23</div>
<div class="a" style="left:1415px;top:300.5px;width:1.00px;height:238.50px;background:#ebeef5;box-shadow:-3px 0 6px rgba(0,0,0,0.06)"></div>
<div class="a" style="left:1416px;top:300.5px;width:184.00px;height:238.50px;background:#fff"></div>
<div class="a" style="left:1416px;top:348.3px;width:184.00px;height:1.00px;background:#ededed"></div>
<div class="a" style="left:1416px;top:395.90000000000003px;width:184.00px;height:1.00px;background:#ededed"></div>
<div class="a" style="left:1416px;top:443.5px;width:184.00px;height:1.00px;background:#ededed"></div>
<div class="a" style="left:1416px;top:491.1px;width:184.00px;height:1.00px;background:#ededed"></div>
<div class="a" style="left:1416px;top:538.6999999999999px;width:184.00px;height:1.00px;background:#ededed"></div>
<div class="t" style="left:1428.48px;top:319.84px;font-size:12px;color:#1890ff;font-weight:400;">详情</div>
<div class="t" style="left:1459.28px;top:319.84px;font-size:12px;color:#1890ff;font-weight:400;">|</div>
<div class="t" style="left:1469.28px;top:319.84px;font-size:12px;color:#1890ff;font-weight:400;">追踪</div>
<div class="t" style="left:1499.78px;top:319.84px;font-size:12px;color:#1890ff;font-weight:400;">|</div>
<div class="t" style="left:1428.48px;top:367.44px;font-size:12px;color:#1890ff;font-weight:400;">详情</div>
<div class="t" style="left:1459.28px;top:367.44px;font-size:12px;color:#1890ff;font-weight:400;">|</div>
<div class="t" style="left:1469.28px;top:367.44px;font-size:12px;color:#1890ff;font-weight:400;">追踪</div>
<div class="t" style="left:1499.78px;top:367.44px;font-size:12px;color:#1890ff;font-weight:400;">|</div>
<div class="t" style="left:1428.48px;top:415.04px;font-size:12px;color:#1890ff;font-weight:400;">详情</div>
<div class="t" style="left:1459.28px;top:415.04px;font-size:12px;color:#1890ff;font-weight:400;">|</div>
<div class="t" style="left:1469.28px;top:415.04px;font-size:12px;color:#1890ff;font-weight:400;">追踪</div>
<div class="t" style="left:1499.78px;top:415.04px;font-size:12px;color:#1890ff;font-weight:400;">|</div>
<div class="t" style="left:1428.28px;top:510.24px;font-size:12px;color:#1890ff;font-weight:400;">物料变更</div>
<div class="t" style="left:1483.28px;top:510.24px;font-size:12px;color:#1890ff;font-weight:400;">|</div>
<div class="t" style="left:1493.18px;top:510.24px;font-size:12px;color:#1890ff;font-weight:400;">编辑</div>
<div class="a" style="left:1398px;top:417.5px;width:162.00px;height:81.50px;background:#fff;box-shadow:0 2px 12px rgba(0,0,0,0.1);border:1px solid #ebeef5;box-sizing:border-box;border-radius:4px"></div>
<div class="a" style="left:1412.3px;top:434.9px;width:10.4px;height:10.4px;border-radius:50%;background:#ff9900"></div>
<div class="t" style="left:1416.42px;top:436.66px;font-size:8px;color:#fff;font-weight:700;">!</div>
<div class="t" style="left:1429.88px;top:435.24px;font-size:12px;color:#5e5e5e;font-weight:400;">确定删除这条记录吗？</div>
<div class="a" style="left:1473.4px;top:465px;width:56.60px;height:20.20px;border:1px solid #dcdfe6;border-radius:3px;box-sizing:border-box;background:#fff"></div>
<div class="t" style="left:1479.78px;top:469.84px;font-size:12px;color:#5e5e5e;font-weight:400;">确定</div>
<div class="a" style="left:232px;top:539.2px;width:1368.00px;height:3.60px;background:#f3f3f3"></div>
<div class="a" style="left:232.4px;top:539.2px;width:273.10px;height:3.60px;background:#adadad;border-radius:2px"></div>
<div class="t" style="left:1208.18px;top:565.54px;font-size:12px;color:#5e5e5e;font-weight:400;">共222条</div>
<div class="a" style="left:1266.2px;top:556.2px;width:27.40px;height:27.40px;border:1px solid #dcdfe6;border-radius:2px;box-sizing:border-box"></div>
<svg class="a" style="left:1275.5px;top:565.5px;" width="8" height="10" viewBox="0 0 8 10"><path d="M6 1 L2 5 L6 9" fill="none" stroke="#606266" stroke-width="1.2"/></svg>
<div class="a" style="left:1300.4px;top:556.2px;width:27.50px;height:27.40px;border:1px solid #1890ff;border-radius:2px;box-sizing:border-box"></div>
<div class="t" style="left:1310.78px;top:565.04px;font-size:12px;color:#1890ff;font-weight:400;">1</div>
<div class="a" style="left:1334.8px;top:556.2px;width:27.00px;height:27.40px;border:1px solid #dcdfe6;border-radius:2px;box-sizing:border-box"></div>
<svg class="a" style="left:1344.5px;top:565.5px;" width="8" height="10" viewBox="0 0 8 10"><path d="M2 1 L6 5 L2 9" fill="none" stroke="#606266" stroke-width="1.2"/></svg>
<div class="a" style="left:1376px;top:556.2px;width:164.00px;height:27.40px;border:1px solid #dcdfe6;border-radius:2px;box-sizing:border-box"></div>
<div class="t" style="left:1384.98px;top:565.54px;font-size:12px;color:#5e5e5e;font-weight:400;">5 条/页</div>
<svg class="a" style="left:1482px;top:566.5px;" width="9" height="7" viewBox="0 0 9 7"><path d="M0.5 0.8 L4.5 5.5 L8.5 0.8" fill="none" stroke="#c0c4cc" stroke-width="1"/></svg>
<div class="a" style="left:1518px;top:260px;width:375px;height:792px;border-radius:64px;box-shadow:-2px 7px 12px rgba(0,0,0,0.2)"></div>
<div class="a" style="left:1501.5px;top:228px;width:408px;height:826px;box-sizing:border-box;border-radius:58px 58px 64px 64px;background:#f6f6f7;border:1.3px solid #bcbcbe"></div>
<div class="a" style="left:1504px;top:230.5px;width:403px;height:821px;box-sizing:border-box;border-radius:56px 56px 62px 62px;border:1px solid #dadadc"></div>
<div class="a" style="left:1508.5px;top:235px;width:394px;height:812px;box-sizing:border-box;border-radius:51px 51px 56px 56px;border:1.2px solid #d0d0d2"></div>
<div class="a" style="left:1513px;top:239.4px;width:385px;height:801px;box-sizing:border-box;border-radius:43px 43px 46px 46px;background:#efeff1;border:1px solid #d6d6d8"></div>
<div class="a" style="left:1499.5px;top:388px;width:3.00px;height:67.00px;background:#e4e4e6;border:1px solid #c4c4c6;border-right:none;box-sizing:border-box;border-radius:2px 0 0 2px"></div>
<div class="a" style="left:1499.5px;top:465px;width:3.00px;height:67.00px;background:#e4e4e6;border:1px solid #c4c4c6;border-right:none;box-sizing:border-box;border-radius:2px 0 0 2px"></div>
<div class="a" style="left:1908.5px;top:390px;width:2.50px;height:70.00px;background:#e4e4e6;border:1px solid #c4c4c6;border-left:none;box-sizing:border-box;border-radius:0 2px 2px 0"></div>
<div class="a" style="left:1644.5px;top:272px;width:13.5px;height:13.5px;border-radius:50%;background:#2b2d33;box-shadow:0 0 0 1.2px #fff"></div>
<div class="a" style="left:1701px;top:250.8px;width:10.5px;height:10.5px;border-radius:50%;background:#303238;box-shadow:0 0 0 1.2px #fff"></div>
<div class="a" style="left:1678.7px;top:250.6px;width:10px;height:10px;border-radius:50%;background:#e3e3e5"></div>
<div class="a" style="left:1676.5px;top:273px;width:62px;height:12px;border-radius:6px;background:#e0e0e2"></div>
<div class="a" style="left:1679.2px;top:276.3px;width:54px;height:5.2px;border-radius:3px;background:#1c1c1e;box-shadow:0 0 0 1px #fff"></div>
<div class="a" style="left:1678.2px;top:969.6px;width:57.6px;height:57.6px;border-radius:50%;background:linear-gradient(30deg,#5e5e60 0%,#9c9c9e 45%,#d9d9db 100%);box-shadow:0 0 0 1px #fafafa"></div>
<div class="a" style="left:1681px;top:972.4px;width:52px;height:52px;border-radius:50%;background:#efeff1"></div>
<div class="a" style="left:1563px;top:1048px;width:21.00px;height:3.50px;background:#cfcfcf;border-radius:2px"></div>
<div class="a" style="left:1680px;top:1047.5px;width:55.00px;height:4.00px;background:#d6d6d2;border-radius:2px"></div>
<div class="a" style="left:1765px;top:1048.5px;width:95px;height:2.2px;background:repeating-linear-gradient(90deg,#b9b9bb 0 3px,transparent 3px 7px)"></div>
<div class="a" style="left:1530px;top:321px;width:354px;height:635.5px;background:#f2f3f5;overflow:hidden">
<div class="a" style="left:0.00px;top:0.00px;width:354.00px;height:106.30px;background:#1890ff"></div>
<div class="a" style="left:0.00px;top:0.00px;width:354.00px;height:1.00px;background:#3a4a5c"></div>
<div class="a" style="left:0.00px;top:103.40px;width:60.60px;height:2.90px;background:#fff"></div>
<svg class="a" style="left:7.00px;top:6.00px" width="18" height="10" viewBox="0 0 18 10"><path d="M0 6h3v4h-3z M4.7 4.5h3v5.5h-3z M9.4 2.3h3v7.7h-3z M14.1 0h3v10h-3z" fill="#fff"/></svg>
<svg class="a" style="left:32.00px;top:4.50px" width="16" height="12" viewBox="0 0 16 12"><path d="M1 4.5 C5 0.5 11 0.5 15 4.5" fill="none" stroke="#fff" stroke-width="1.8"/><path d="M3.7 7 C6.2 4.6 9.8 4.6 12.3 7" fill="none" stroke="#fff" stroke-width="1.8"/><circle cx="8" cy="10" r="1.6" fill="#fff"/></svg>
<div class="t" style="left:176.91px;top:6.06px;font-size:11.5px;color:#fff;font-weight:400;transform:translateX(-50%);margin-left:0">12:00</div>
<svg class="a" style="left:330.00px;top:6.80px" width="17" height="8" viewBox="0 0 17 8"><rect x="0.5" y="0.5" width="14.5" height="7" rx="1" fill="none" stroke="#fff" stroke-width="1"/><rect x="2" y="2" width="11.5" height="4" fill="#fff"/><rect x="15.5" y="2.5" width="1.2" height="3" fill="#fff"/></svg>
<svg class="a" style="left:19.00px;top:32.50px" width="13" height="17" viewBox="0 0 13 17"><path d="M11.5 1 L2 8.2 L11.5 15.5" fill="none" stroke="#fff" stroke-width="1.6"/></svg>
<div class="t" style="left:139.49px;top:34.05px;font-size:18.5px;color:#fff;font-weight:400;-webkit-text-stroke:0.45px #fff">计划维护</div>
<svg class="a" style="left:290.50px;top:33.00px" width="16" height="17" viewBox="0 0 16 17"><circle cx="6.8" cy="6.8" r="5.8" fill="none" stroke="#fff" stroke-width="1.6"/><path d="M11 11 L15 15.2" stroke="#fff" stroke-width="1.7"/></svg>
<svg class="a" style="left:320.00px;top:34.00px" width="16" height="14" viewBox="0 0 16 14"><path d="M0 1h15.6M0 6.7h15.6M0 12.4h15.6" stroke="#fff" stroke-width="1.6"/></svg>
<div class="t" style="left:14.70px;top:77.85px;font-size:15px;color:#fff;font-weight:400;-webkit-text-stroke:0.2px #fff">全部</div>
<div class="t" style="left:75.10px;top:77.85px;font-size:15px;color:#fff;font-weight:400;-webkit-text-stroke:0.2px #fff">编制中</div>
<div class="t" style="left:151.30px;top:77.85px;font-size:15px;color:#fff;font-weight:400;-webkit-text-stroke:0.2px #fff">审核中</div>
<div class="t" style="left:226.90px;top:77.85px;font-size:15px;color:#fff;font-weight:400;-webkit-text-stroke:0.2px #fff">已下达</div>
<div class="t" style="left:301.90px;top:77.85px;font-size:15px;color:#fff;font-weight:400;-webkit-text-stroke:0.2px #fff">执行中</div>
<div class="a" style="left:0.00px;top:106.50px;width:354.00px;height:121.20px;background:#fff"></div>
<div class="t" style="left:14.68px;top:119.22px;font-size:15.3px;color:#222;font-weight:400;-webkit-text-stroke:0.15px #222">GZ20200906001</div>
<div class="a" style="left:290.00px;top:115.25px;width:49.00px;height:20.65px;background:#eef3ff;border:1px solid #a9c1fb;color:#3c64e6;box-sizing:border-box;border-radius:2px"></div>
<div class="t" style="left:297.34px;top:120.97px;font-size:11px;color:#3c64e6;font-weight:400;">编制中</div>
<svg class="a" style="left:18.00px;top:147.75px" width="40" height="39" viewBox="0 0 40 39"><svg x="0" y="0" width="40" height="39.5" viewBox="90 100 895 885"><g fill="none" stroke="#111" stroke-width="58" stroke-linecap="round">
<rect x="120" y="128" width="290" height="287" stroke-linecap="butt"/><rect x="663" y="128" width="290" height="287"/><rect x="120" y="670" width="290" height="287"/>
</g><g fill="#111"><rect x="220" y="225" width="92" height="95"/><rect x="760" y="225" width="95" height="95"/><rect x="220" y="770" width="92" height="92"/></g>
<g fill="none" stroke="#111" stroke-width="58" stroke-linecap="round">
<path d="M535 155V205 M535 320V322 M535 440V530 M180 470V472 M120 545H122 M245 545H247 M315 610V612 M370 545H665V610 M815 545H865 M950 545H952 M535 660V720 M725 675H727 M840 675H960 M535 820V905 M660 760V905 M790 770H792 M950 770H952 M915 840H917 M790 895H792 M600 960H602 M840 960H960"/>
</g></svg></svg>
<div class="t" style="left:68.07px;top:151.64px;font-size:11.3px;color:#9a9a9a;font-weight:400;">发运测试订单</div>
<div class="t" style="left:68.07px;top:174.24px;font-size:11.3px;color:#9a9a9a;font-weight:400;">生产部</div>
<div class="t" style="left:117.07px;top:174.24px;font-size:11.3px;color:#9a9a9a;font-weight:400;">张发财</div>
<div class="a" style="left:15.00px;top:196.60px;width:324.00px;height:1.00px;background:#ececec"></div>
<div class="t" style="left:271.12px;top:206.21px;font-size:13px;color:#1890ff;font-weight:400;">打印</div>
<div class="t" style="left:312.72px;top:206.21px;font-size:13px;color:#1890ff;font-weight:400;">详情</div>
<div class="a" style="left:0.00px;top:235.20px;width:354.00px;height:121.20px;background:#fff"></div>
<div class="t" style="left:14.68px;top:247.92px;font-size:15.3px;color:#222;font-weight:400;-webkit-text-stroke:0.15px #222">GZ20200906001</div>
<div class="a" style="left:290.00px;top:243.95px;width:49.00px;height:20.65px;background:#eef3ff;border:1px solid #a9c1fb;color:#3c64e6;box-sizing:border-box;border-radius:2px"></div>
<div class="t" style="left:297.34px;top:249.67px;font-size:11px;color:#3c64e6;font-weight:400;">审批中</div>
<svg class="a" style="left:18.00px;top:276.45px" width="40" height="39" viewBox="0 0 40 39"><svg x="0" y="0" width="40" height="39.5" viewBox="90 100 895 885"><g fill="none" stroke="#111" stroke-width="58" stroke-linecap="round">
<rect x="120" y="128" width="290" height="287" stroke-linecap="butt"/><rect x="663" y="128" width="290" height="287"/><rect x="120" y="670" width="290" height="287"/>
</g><g fill="#111"><rect x="220" y="225" width="92" height="95"/><rect x="760" y="225" width="95" height="95"/><rect x="220" y="770" width="92" height="92"/></g>
<g fill="none" stroke="#111" stroke-width="58" stroke-linecap="round">
<path d="M535 155V205 M535 320V322 M535 440V530 M180 470V472 M120 545H122 M245 545H247 M315 610V612 M370 545H665V610 M815 545H865 M950 545H952 M535 660V720 M725 675H727 M840 675H960 M535 820V905 M660 760V905 M790 770H792 M950 770H952 M915 840H917 M790 895H792 M600 960H602 M840 960H960"/>
</g></svg></svg>
<div class="t" style="left:68.07px;top:280.34px;font-size:11.3px;color:#9a9a9a;font-weight:400;">发运测试订单</div>
<div class="t" style="left:68.07px;top:302.94px;font-size:11.3px;color:#9a9a9a;font-weight:400;">生产部</div>
<div class="t" style="left:117.07px;top:302.94px;font-size:11.3px;color:#9a9a9a;font-weight:400;">张发财</div>
<div class="a" style="left:15.00px;top:325.30px;width:324.00px;height:1.00px;background:#ececec"></div>
<div class="t" style="left:202.92px;top:334.91px;font-size:13px;color:#1890ff;font-weight:400;">详情</div>
<div class="t" style="left:244.42px;top:334.91px;font-size:13px;color:#1890ff;font-weight:400;">追踪</div>
<div class="t" style="left:286.02px;top:334.91px;font-size:13px;color:#1890ff;font-weight:400;">超级变更</div>
<div class="a" style="left:0.00px;top:363.70px;width:354.00px;height:121.20px;background:#fff"></div>
<div class="t" style="left:14.68px;top:376.42px;font-size:15.3px;color:#222;font-weight:400;-webkit-text-stroke:0.15px #222">GZ20200906001</div>
<div class="a" style="left:290.00px;top:372.45px;width:49.00px;height:20.65px;background:#f3fdec;border:1px solid #a8e08a;color:#4fb51f;box-sizing:border-box;border-radius:2px"></div>
<div class="t" style="left:297.34px;top:378.17px;font-size:11px;color:#4fb51f;font-weight:400;">已下达</div>
<svg class="a" style="left:18.00px;top:404.95px" width="40" height="39" viewBox="0 0 40 39"><svg x="0" y="0" width="40" height="39.5" viewBox="90 100 895 885"><g fill="none" stroke="#111" stroke-width="58" stroke-linecap="round">
<rect x="120" y="128" width="290" height="287" stroke-linecap="butt"/><rect x="663" y="128" width="290" height="287"/><rect x="120" y="670" width="290" height="287"/>
</g><g fill="#111"><rect x="220" y="225" width="92" height="95"/><rect x="760" y="225" width="95" height="95"/><rect x="220" y="770" width="92" height="92"/></g>
<g fill="none" stroke="#111" stroke-width="58" stroke-linecap="round">
<path d="M535 155V205 M535 320V322 M535 440V530 M180 470V472 M120 545H122 M245 545H247 M315 610V612 M370 545H665V610 M815 545H865 M950 545H952 M535 660V720 M725 675H727 M840 675H960 M535 820V905 M660 760V905 M790 770H792 M950 770H952 M915 840H917 M790 895H792 M600 960H602 M840 960H960"/>
</g></svg></svg>
<div class="t" style="left:68.07px;top:408.84px;font-size:11.3px;color:#9a9a9a;font-weight:400;">发运测试订单</div>
<div class="t" style="left:68.07px;top:431.44px;font-size:11.3px;color:#9a9a9a;font-weight:400;">生产部</div>
<div class="t" style="left:117.07px;top:431.44px;font-size:11.3px;color:#9a9a9a;font-weight:400;">张发财</div>
<div class="a" style="left:15.00px;top:453.80px;width:324.00px;height:1.00px;background:#ececec"></div>
<div class="t" style="left:202.92px;top:463.41px;font-size:13px;color:#1890ff;font-weight:400;">打印</div>
<div class="t" style="left:244.42px;top:463.41px;font-size:13px;color:#1890ff;font-weight:400;">详情</div>
<div class="t" style="left:286.02px;top:463.41px;font-size:13px;color:#1890ff;font-weight:400;">超级变更</div>
<div class="a" style="left:0.00px;top:492.30px;width:354.00px;height:121.20px;background:#fff"></div>
<div class="t" style="left:14.68px;top:505.02px;font-size:15.3px;color:#222;font-weight:400;-webkit-text-stroke:0.15px #222">GZ20200906001</div>
<div class="a" style="left:290.00px;top:501.05px;width:49.00px;height:20.65px;background:#eef3ff;border:1px solid #a9c1fb;color:#3c64e6;box-sizing:border-box;border-radius:2px"></div>
<div class="t" style="left:297.34px;top:506.77px;font-size:11px;color:#3c64e6;font-weight:400;">执行中</div>
<svg class="a" style="left:18.00px;top:533.55px" width="40" height="39" viewBox="0 0 40 39"><svg x="0" y="0" width="40" height="39.5" viewBox="90 100 895 885"><g fill="none" stroke="#111" stroke-width="58" stroke-linecap="round">
<rect x="120" y="128" width="290" height="287" stroke-linecap="butt"/><rect x="663" y="128" width="290" height="287"/><rect x="120" y="670" width="290" height="287"/>
</g><g fill="#111"><rect x="220" y="225" width="92" height="95"/><rect x="760" y="225" width="95" height="95"/><rect x="220" y="770" width="92" height="92"/></g>
<g fill="none" stroke="#111" stroke-width="58" stroke-linecap="round">
<path d="M535 155V205 M535 320V322 M535 440V530 M180 470V472 M120 545H122 M245 545H247 M315 610V612 M370 545H665V610 M815 545H865 M950 545H952 M535 660V720 M725 675H727 M840 675H960 M535 820V905 M660 760V905 M790 770H792 M950 770H952 M915 840H917 M790 895H792 M600 960H602 M840 960H960"/>
</g></svg></svg>
<div class="t" style="left:68.07px;top:537.44px;font-size:11.3px;color:#9a9a9a;font-weight:400;">发运测试订单</div>
<div class="t" style="left:68.07px;top:560.04px;font-size:11.3px;color:#9a9a9a;font-weight:400;">生产部</div>
<div class="t" style="left:117.07px;top:560.04px;font-size:11.3px;color:#9a9a9a;font-weight:400;">张发财</div>
<div class="a" style="left:15.00px;top:582.40px;width:324.00px;height:1.00px;background:#ececec"></div>
<div class="t" style="left:202.92px;top:592.01px;font-size:13px;color:#1890ff;font-weight:400;">打印</div>
<div class="t" style="left:244.42px;top:592.01px;font-size:13px;color:#1890ff;font-weight:400;">详情</div>
<div class="t" style="left:286.02px;top:592.01px;font-size:13px;color:#1890ff;font-weight:400;">超级变更</div>
<div class="a" style="left:0.00px;top:620.90px;width:354.00px;height:121.20px;background:#fff"></div>
<div class="t" style="left:14.68px;top:633.62px;font-size:15.3px;color:#222;font-weight:400;-webkit-text-stroke:0.15px #222">GZ20200906001</div>
<div class="a" style="left:290.00px;top:629.65px;width:49.00px;height:20.65px;background:#f3fdec;border:1px solid #a8e08a;color:#4fb51f;box-sizing:border-box;border-radius:2px"></div>
<div class="t" style="left:297.34px;top:635.37px;font-size:11px;color:#4fb51f;font-weight:400;">已下达</div>
<svg class="a" style="left:18.00px;top:662.15px" width="40" height="39" viewBox="0 0 40 39"><svg x="0" y="0" width="40" height="39.5" viewBox="90 100 895 885"><g fill="none" stroke="#111" stroke-width="58" stroke-linecap="round">
<rect x="120" y="128" width="290" height="287" stroke-linecap="butt"/><rect x="663" y="128" width="290" height="287"/><rect x="120" y="670" width="290" height="287"/>
</g><g fill="#111"><rect x="220" y="225" width="92" height="95"/><rect x="760" y="225" width="95" height="95"/><rect x="220" y="770" width="92" height="92"/></g>
<g fill="none" stroke="#111" stroke-width="58" stroke-linecap="round">
<path d="M535 155V205 M535 320V322 M535 440V530 M180 470V472 M120 545H122 M245 545H247 M315 610V612 M370 545H665V610 M815 545H865 M950 545H952 M535 660V720 M725 675H727 M840 675H960 M535 820V905 M660 760V905 M790 770H792 M950 770H952 M915 840H917 M790 895H792 M600 960H602 M840 960H960"/>
</g></svg></svg>
<div class="t" style="left:68.07px;top:666.04px;font-size:11.3px;color:#9a9a9a;font-weight:400;">发运测试订单</div>
<div class="t" style="left:68.07px;top:688.64px;font-size:11.3px;color:#9a9a9a;font-weight:400;">生产部</div>
<div class="t" style="left:117.07px;top:688.64px;font-size:11.3px;color:#9a9a9a;font-weight:400;">张发财</div>
<div class="a" style="left:15.00px;top:711.00px;width:324.00px;height:1.00px;background:#ececec"></div>
</div>
</body></html>
